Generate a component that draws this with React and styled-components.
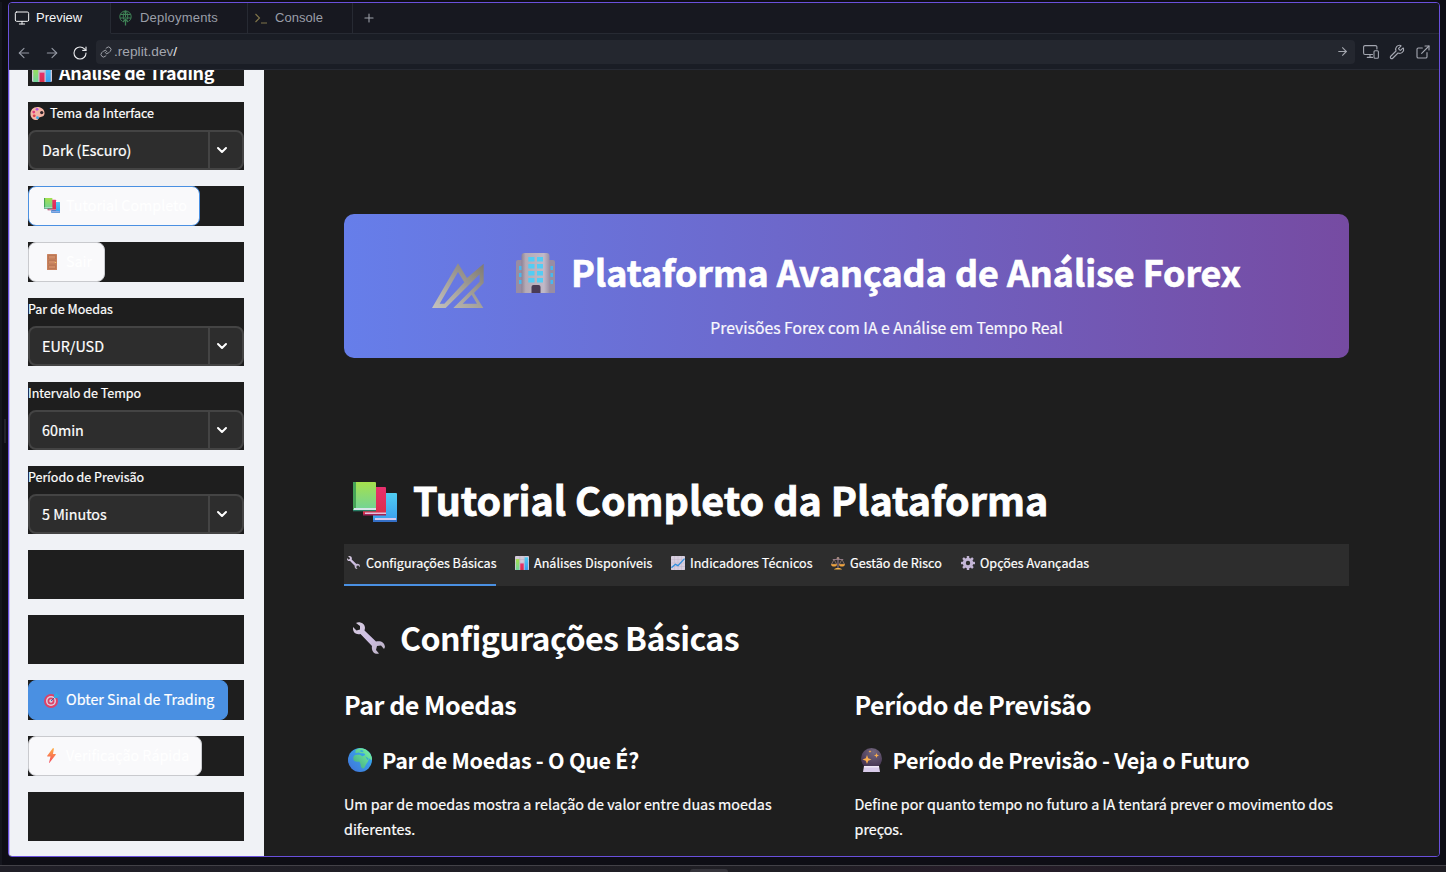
import React from "react";
import styled, { createGlobalStyle } from "styled-components";
import {
  ArrowLeft,
  ArrowRight,
  RotateCw,
  Link,
  Wrench,
  ExternalLink,
  Plus,
  Monitor,
  Terminal,
} from "lucide-react";

const SANS = `"Noto Sans CJK JP", "Noto Sans", sans-serif`;
const UI = `"Liberation Sans", Arial, sans-serif`;

const GlobalStyle = createGlobalStyle`
  * { box-sizing: border-box; }
  html, body { margin: 0; height: 872px; overflow: hidden; background: #0e0e15; }
  h1, h2, h3, h4, p { margin: 0; font-weight: inherit; }
  svg { display: block; flex: none; }
`;

/* ---------- workspace shell ---------- */

const Workspace = styled.div`
  width: 1446px;
  height: 872px;
  display: flex;
  flex-direction: column;
  background: #0e0e15;
  font-family: ${UI};
`;
const Stage = styled.div`
  display: flex;
  height: 865px;
  padding-top: 2px;
`;
const LeftEdge = styled.div`
  width: 8px;
  display: flex;
  align-items: center;
  background: linear-gradient(90deg, #15161e 2px, transparent 2px);
`;
const LeftGrip = styled.div`
  width: 2px;
  height: 24px;
  margin-left: 4px;
  margin-bottom: 6px;
  background: #22222b;
`;
const Pane = styled.div`
  width: 1432px;
  height: 855px;
  border: 1px solid #6a50dc;
  border-radius: 4px;
  overflow: hidden;
  display: flex;
  flex-direction: column;
  background: #1a1d25;
`;
const Dock = styled.div`
  height: 7px;
  border-top: 1px solid #424147;
  background: linear-gradient(90deg, #201f27, #1f1e24 55%, #261c29 68%, #1f1d23 85%);
  padding: 3px 0 0 690px;
`;
const DockGrip = styled.div`
  width: 38px;
  height: 3px;
  border-radius: 3px 3px 0 0;
  background: #35343b;
`;

const TabStrip = styled.div`
  height: 31px;
  display: flex;
  flex: none;
`;
const PaneTab = styled.div`
  width: ${(p) => p.$w}px;
  display: flex;
  align-items: center;
  gap: ${(p) => p.$gap}px;
  padding-left: ${(p) => p.$pad}px;
  padding-bottom: 1px;
  color: ${(p) => (p.$active ? "#f3f4f6" : "#9a9ea8")};
  background: ${(p) => (p.$active ? "#1a1d25" : "#171820")};
  border-right: 1px solid #272a33;
  border-bottom: 1px solid ${(p) => (p.$active ? "#1a1d25" : "#272a33")};
  font-size: 13px;
  letter-spacing: ${(p) => p.$ls || 0}px;
`;
const TabFill = styled.div`
  flex: 1;
  display: flex;
  align-items: center;
  padding-left: 9px;
  background: #171820;
  border-bottom: 1px solid #272a33;
  color: #a0a3ab;
`;
const AddressBar = styled.div`
  height: 36px;
  flex: none;
  display: flex;
  align-items: center;
  border-bottom: 1px solid #272a33;
  color: #a3a6b0;
`;
const NavButton = styled.div`
  width: 28px;
  height: 18px;
  display: flex;
  align-items: flex-end;
  justify-content: center;
  color: ${(p) => (p.$bright ? "#e8e9ec" : "#9498a3")};
`;
const Nav = styled.div`
  display: flex;
  padding-left: 1px;
`;
const UrlField = styled.div`
  width: 1259px;
  height: 24px;
  margin-left: 2px;
  border-radius: 4px;
  background: #24272f;
  display: flex;
  align-items: center;
  padding: 0 6px 0 4px;
  gap: 2px;
  font-size: 13.7px;
  color: #a3a6ae;
  b { font-weight: 400; color: #eceef0; }
`;
const Url = styled.span`
  flex: 1;
  padding-bottom: 1px;
`;
const Tools = styled.div`
  display: flex;
  gap: 10px;
  padding-left: 8px;
`;

/* ---------- embedded app ---------- */

const Page = styled.div`
  flex: 1;
  display: flex;
  min-height: 0;
  font-family: ${SANS};
  color: #fff;
  background: #1e1e1e;
  -webkit-text-stroke: 0.2px currentColor;
`;
const Sidebar = styled.aside`
  width: 255px;
  padding: 0 20px 0 18px;
  border-left: 1px solid #c9bef7;
  background: #f0f2f6;
  display: flex;
  flex-direction: column;
  gap: 16px;
`;
const Block = styled.div`
  height: ${(p) => p.$h}px;
  flex: none;
  background: #1e1e1e;
`;
const ClippedTitle = styled(Block)`
  display: flex;
  flex-direction: column;
  justify-content: flex-end;
  overflow: hidden;
`;
const SideHeading = styled.h2`
  display: flex;
  align-items: center;
  height: 30px;
  flex: none;
  margin-bottom: -1px;
  font-size: 17.9px;
  font-weight: 700;
  white-space: nowrap;
  letter-spacing: -0.34px;
  -webkit-text-stroke: 0;
`;
const FieldLabel = styled.div`
  height: 28px;
  display: flex;
  line-height: 21px;
  font-size: 12.53px;
  white-space: nowrap;
`;
const Select = styled.div`
  height: 40px;
  display: flex;
  border: 2px solid #444;
  border-radius: 8px;
  background: #2d2d2d;
  overflow: hidden;
`;
const SelectValue = styled.div`
  width: 180px;
  padding-left: 12px;
  line-height: 35px;
  font-size: 14.32px;
  border-right: 2px solid #444;
  white-space: nowrap;
`;
const SelectArrow = styled.div`
  flex: 1;
  display: flex;
  align-items: center;
  padding-left: 6px;
`;
const tones = {
  focus: ["#4a90e2", "#f9f9fb", "#ffffff"],
  plain: ["#c9cace", "#f9f9fb", "#ffffff"],
  primary: ["#4a90e2", "#4a90e2", "#ffffff"],
};
const Button = styled.div`
  width: ${(p) => p.$w}px;
  height: 40px;
  border: 1px solid ${(p) => tones[p.$tone][0]};
  border-radius: 8px;
  background: ${(p) => tones[p.$tone][1]};
  color: ${(p) => tones[p.$tone][2]};
  display: flex;
  align-items: center;
  padding: 0 0 3px 14px;
  font-size: 14.34px;
  white-space: nowrap;
`;
const Glyph = styled.span`
  width: ${(p) => p.$w}px;
  padding-left: ${(p) => p.$l || 0}px;
  padding-top: ${(p) => p.$t || 0}px;
  flex: none;
`;

const Main = styled.main`
  flex: 1;
  padding: 144px 0 0 80px;
`;
const Banner = styled.div`
  width: 1005px;
  height: 144px;
  border-radius: 10px;
  background: linear-gradient(90deg, #667eea 0%, #764ba2 100%);
  display: flex;
  padding: 33px 0 0 88px;
`;
const BannerLogo = styled.div`
  padding-top: 16px;
  width: 76px;
`;
const BannerText = styled.div`
  width: 757px;
`;
const BannerTitle = styled.h1`
  height: 48px;
  display: flex;
  align-items: center;
  font-size: 35.8px;
  font-weight: 700;
  white-space: nowrap;
  -webkit-text-stroke: 0.7px currentColor;
`;
const BannerSub = styled.p`
  margin-top: 20px;
  line-height: 26px;
  font-size: 15.75px;
  text-align: center;
  color: #f9f8fd;
`;
const Heading = styled.h2`
  display: flex;
  align-items: center;
  height: ${(p) => p.$h}px;
  margin-top: ${(p) => p.$mt}px;
  font-size: ${(p) => p.$size}px;
  font-weight: 700;
  letter-spacing: ${(p) => p.$ls || 0}px;
  -webkit-text-stroke: ${(p) => p.$stroke || 0}px currentColor;
  white-space: nowrap;
`;
const Tabs = styled.nav`
  width: 1005px;
  height: 42px;
  margin-top: 20px;
  display: flex;
  gap: 16px;
  background: #2d2d2d;
`;
const Tab = styled.div`
  width: ${(p) => p.$w}px;
  display: flex;
  border-bottom: 2px solid ${(p) => (p.$active ? "#4a90e2" : "transparent")};
  line-height: 37px;
  font-size: 12.58px;
  white-space: nowrap;
`;
const Columns = styled.div`
  width: 1005px;
  display: grid;
  grid-template-columns: 1fr 1fr;
  gap: 16px;
`;
const Body = styled.p`
  margin-top: 17px;
  font-size: 14.33px;
  line-height: 25px;
`;

/* ---------- drawings ---------- */

const Svg = ({ w, h, vb, children }) => (
  <svg width={w} height={h || w} viewBox={vb || "0 0 32 32"} fill="none">
    {children}
  </svg>
);

const HiddenSvg = styled.svg`
  position: absolute;
`;
const Defs = () => (
  <HiddenSvg width="0" height="0">
    <defs>
      <linearGradient id="green" x1="0" y1="0" x2="0" y2="1">
        <stop stopColor="#a5e04d" /><stop offset="1" stopColor="#6fd39a" />
      </linearGradient>
      <linearGradient id="pink" x1="0" y1="0" x2="0" y2="1">
        <stop stopColor="#e8306e" /><stop offset="1" stopColor="#d92f48" />
      </linearGradient>
      <linearGradient id="blue" x1="0" y1="0" x2="0" y2="1">
        <stop stopColor="#50cdf2" /><stop offset="1" stopColor="#3a9bee" />
      </linearGradient>
      <linearGradient id="metal" x1="0" y1="1" x2="1" y2="0">
        <stop stopColor="#c4c2be" /><stop offset=".5" stopColor="#a3a09a" /><stop offset="1" stopColor="#7f7a72" />
      </linearGradient>
      <linearGradient id="wall" x1="0" y1="0" x2="1" y2="0">
        <stop stopColor="#8d8496" /><stop offset=".15" stopColor="#b5abb6" /><stop offset=".8" stopColor="#c0b9c8" /><stop offset="1" stopColor="#9b91a5" />
      </linearGradient>
      <linearGradient id="bolt" x1="0" y1="0" x2="0" y2="1">
        <stop stopColor="#ffb044" /><stop offset="1" stopColor="#f3475c" />
      </linearGradient>
      <linearGradient id="sea" x1="1" y1="0" x2="0" y2="1">
        <stop stopColor="#35b8f2" /><stop offset="1" stopColor="#416fd8" />
      </linearGradient>
      <linearGradient id="land" x1="1" y1="0" x2="0" y2="1">
        <stop stopColor="#7df8a6" /><stop offset="1" stopColor="#3da581" />
      </linearGradient>
      <linearGradient id="steel" x1="0" y1="0" x2="1" y2="1">
        <stop stopColor="#d5cbdc" /><stop offset=".5" stopColor="#cfbfe4" /><stop offset="1" stopColor="#b9b0c0" />
      </linearGradient>
      <radialGradient id="orb" cx=".6" cy=".2" r=".8">
        <stop stopColor="#74687f" /><stop offset="1" stopColor="#41304f" />
      </radialGradient>
    </defs>
  </HiddenSvg>
);

const Books = ({ w }) => (
  <Svg w={w} h={(w * 40) / 44} vb="0 0 44 40">
    <path d="M20 11h23q1 0 1 1v28H20z" fill="url(#blue)" />
    <path d="M22 36h21v2H22z" fill="#d6c8ee" /><path d="M20 38h24v2H20z" fill="#346fc6" />
    <path d="M10 5h22q1 0 1 1v27H10z" fill="url(#pink)" />
    <path d="M12 30.500h21v1.500H12z" fill="#e3c0dd" /><path d="M10 32h23v1.500H10z" fill="#a32354" />
    <path d="M0 1q0-1 1-1h21q1 0 1 1v28H0z" fill="url(#green)" />
    <path d="M0 0h3v27H0z" fill="#46a457" /><path d="M1 26h22v2H1z" fill="#d5e5e8" /><path d="M0 28h23v1.300H0z" fill="#287e66" />
  </Svg>
);
const BarChart = ({ w }) => (
  <Svg w={w}>
    <rect width="32" height="32" rx="2" fill="#d3cad9" />
    <path d="M0 8h32M0 16h32M11 0v32M21 0v32" stroke="#b6a9c0" strokeWidth="1" />
    <rect x="2" y="7" width="8" height="25" fill="url(#green)" />
    <rect x="12" y="17" width="8" height="15" fill="url(#pink)" />
    <rect x="22" y="3" width="8" height="29" fill="url(#blue)" />
  </Svg>
);
const LineChart = ({ w }) => (
  <Svg w={w}>
    <rect width="32" height="32" rx="2" fill="#d8cfdf" />
    <path d="M0 8h32M0 16h32M0 24h32M8 0v32M16 0v32M24 0v32" stroke="#beb2c8" />
    <path d="M1 27l9-8 6 3L31 6" stroke="#318fdd" strokeWidth="3" />
  </Svg>
);
const Palette = ({ w }) => (
  <Svg w={w}>
    <path d="M16 2C6 2 1 9 1 17c0 8 6 13 13 13 5 0 3-5 7-6 5-1 10-2 10-9C31 7 24 2 16 2z" fill="#f3b5a4" />
    <circle cx="8" cy="13" r="3" fill="#e23d7d" /><circle cx="15" cy="7" r="3" fill="#b454db" />
    <circle cx="9" cy="21" r="3" fill="#de3f4f" /><circle cx="16" cy="25" r="3" fill="#41a9e6" />
    <circle cx="25" cy="14" r="3.500" fill="#34242a" />
  </Svg>
);
const Door = ({ w }) => (
  <Svg w={w} h={w * 1.6} vb="0 0 20 32">
    <rect width="20" height="32" rx="1" fill="#c9825e" />
    <path d="M3 3h14v7H3zM3 13h14v7H3zM3 23h14v6H3z" fill="#d08b66" stroke="#ab694b" />
    <circle cx="17" cy="17" r="1.500" fill="#f4c267" />
  </Svg>
);
const Target = ({ w }) => (
  <Svg w={w}>
    <circle cx="14" cy="18" r="14" fill="#de4268" /><circle cx="14" cy="18" r="10" fill="#dccfe0" />
    <circle cx="14" cy="18" r="7" fill="#de4268" /><circle cx="14" cy="18" r="3.500" fill="#dccfe0" />
    <path d="M14 18L25 7" stroke="#3a66a3" strokeWidth="2" />
    <path d="M20 6l6-6 1 5 5 1-6 6h-6z" fill="#35a6e4" />
  </Svg>
);
const Bolt = ({ w }) => (
  <Svg w={w} h={w * 1.7} vb="0 0 18 31">
    <path d="M12 0L0 16q0 1 1 1h6L4 30q0 1 1 0l13-17q0-1-1-1h-5l2-11q0-1-2-1z" fill="url(#bolt)" />
  </Svg>
);
const Spanner = ({ w }) => (
  <Svg w={w}>
    <path d="M3 1c3-2 9 0 9 5l-.5 2.500L23 19.500c5-1 8.500 1 9 5.500l-1 2-3-3.500-4 .5-1 4 3 3.500c-4 1.500-8-2-7-7.500L7.500 12C3 13 0 10.500 0 6.500V5l3.500 3.500L7 7.500V4z" fill="url(#steel)" />
  </Svg>
);
const Scales = ({ w }) => (
  <Svg w={w}>
    <path d="M16 2v26M4 8h24" stroke="#8d7788" strokeWidth="2.500" />
    <path d="M7 8L1 19h12zM25 8l-6 11h12z" stroke="#ac8c80" strokeWidth="1.500" />
    <path d="M0 19h14c0 7-14 7-14 0zM18 19h14c0 7-14 7-14 0z" fill="#eea23c" />
    <path d="M7 31c0-5 18-5 18 0z" fill="#f2b24a" /><circle cx="16" cy="5" r="3" fill="#a5887d" />
  </Svg>
);
const Gear = ({ w }) => (
  <Svg w={w}>
    <circle cx="16" cy="16" r="8.500" stroke="#c4b6d6" strokeWidth="7" />
    {[0, 45, 90, 135, 180, 225, 270, 315].map((a) => (
      <rect key={a} x="13.200" y="0" width="5.600" height="7" rx="1.200" fill="#c4b6d6" transform={`rotate(${a} 16 16)`} />
    ))}
  </Svg>
);
const Globe = ({ w }) => (
  <Svg w={w}>
    <circle cx="16" cy="16" r="16" fill="url(#sea)" />
    <path d="M10 3C15-1 22 0 26 4c4 3 6 7 6 12-2 0-3-2-4-2-1 5-4 7-5 10-2 5-5 4-6 0 0-3-1-4-2-6-4 1-8 0-8-4 0-3 1-4 4-5l5 0 3 2 3-1 1-2-3-1-3 0-3-1-4 1z" fill="url(#land)" />
    <path d="M23 11l3 5 1.500-2zM15 4l4 1.500 2-1.500-3-1.500z" fill="#36a9d8" />
  </Svg>
);
const Crystal = ({ w }) => (
  <Svg w={w} h={(w * 24) / 21} vb="0 0 21 24">
    <circle cx="10.500" cy="10.500" r="10.500" fill="url(#orb)" />
    <path d="M3 18h15l1 6H2z" fill="#d9cbea" /><path d="M3 18h15v1.500H3z" fill="#f0e8f7" />
    <path d="M6 7l1.200 3.200L10.500 11.500 7.200 12.700 6 16l-1.200-3.300L1.500 11.500l3.300-1.300zM15.500 5l.7 1.800 1.800.7-1.800.7-.7 1.800-.7-1.800-1.800-.7 1.800-.7zM9 2l.4 1.100 1.100.4-1.100.4L9 5l-.4-1.100-1.100-.4 1.100-.4z" fill="#f9ad4e" />
  </Svg>
);
const Building = () => (
  <Svg w={39} h={40} vb="0 0 39 40">
    <path d="M0 9q0-2 2-2h6v33H0zM39 9q0-2-2-2h-6v33h8z" fill="#988da3" />
    <path d="M5.500 3q0-3 3-3h22q3 0 3 3v37h-28z" fill="url(#wall)" />
    {[4, 11, 18, 25].map((y) => (
      <path key={y} d={`M12.300 ${y}h6.200v4.600h-6.200zM21 ${y}h6v4.600h-6z`} fill="#53cdf4" />
    ))}
    {[13, 20, 27].map((y) => (
      <path key={y} d={`M3 ${y}h2.500v4H3zM34.500 ${y}h2.500v4h-2.500z`} fill="#48b8ee" />
    ))}
    <path d="M15.500 40v-6q0-2 2-2h5q2 0 2 2v6z" fill="#4a3b55" />
  </Svg>
);
const Logo = () => (
  <Svg w={52} h={45} vb="277 190 156 135">
    <path
      fillRule="evenodd"
      fill="url(#metal)"
      d="M277 325L355 191L382 235L432 192V250L403 280L431 325H341L420 246V224L318 325ZM300 312L355 217L374 248L314 312ZM369 312L396 285L412 312Z"
    />
  </Svg>
);
const DeployIcon = () => (
  <svg width="13" height="16" viewBox="0 0 13 16" fill="none" stroke="#3f8256" strokeWidth="1">
    <path d="M3 11.200A5.700 5.700 0 1 1 10 11.200M1.300 4.500h10.400M1 8h11M6.500.700C4 3 3.800 7 4.800 9.500M6.500.700C9 3 9.200 7 8.200 9.500M6.500 1v6" />
    <path d="M6.500 15.500V9.500M3.800 12l2.700-2.700L9.200 12" strokeWidth="1.300" />
  </svg>
);
const PromptIcon = () => (
  <svg width="14" height="14" viewBox="0 0 14 14" fill="none" stroke="#80754a" strokeWidth="1.100">
    <path d="M1.500 3l4 4-4 4M7 12h6" />
  </svg>
);
const DevicesIcon = () => (
  <svg width="16" height="16" viewBox="0 0 16 16" fill="none" stroke="currentColor" strokeWidth="1.100">
    <path d="M9.500 10.500H2A1.400 1.400 0 0 1 .6 9.100V3A1.400 1.400 0 0 1 2 1.600h10.500A1.400 1.400 0 0 1 13.900 3v2M7 10.500v2.800M4.300 13.400H9.500" strokeLinecap="round" />
    <rect x="11" y="6.800" width="4.400" height="7.400" rx="1" />
  </svg>
);
const Chevron = () => (
  <svg width="12" height="8" viewBox="0 0 12 8" fill="none">
    <path d="M2 2l4 4 4-4" stroke="#fff" strokeWidth="2" strokeLinecap="round" strokeLinejoin="round" />
  </svg>
);

const Field = ({ icon, label, value }) => (
  <Block $h={68}>
    <FieldLabel>{icon}{label}</FieldLabel>
    <Select>
      <SelectValue>{value}</SelectValue>
      <SelectArrow><Chevron /></SelectArrow>
    </Select>
  </Block>
);
const Action = ({ tone, w, icon, inset = 1, children }) => (
  <Block $h={40}>
    <Button $tone={tone} $w={w}>
      <Glyph $w={23} $l={inset} $t={2}>{icon}</Glyph>
      {children}
    </Button>
  </Block>
);

const TABS = [
  [152, "Configurações Básicas", <Spanner w={13} />],
  [140, "Análises Disponíveis", <BarChart w={14} />],
  [144, "Indicadores Técnicos", <LineChart w={14} />],
  [114, "Gestão de Risco", <Scales w={14} />],
  [131, "Opções Avançadas", <Gear w={14} />],
];

export default function App() {
  return (
    <Workspace>
      <GlobalStyle />
      <Defs />
      <Stage>
        <LeftEdge><LeftGrip /></LeftEdge>
        <Pane>
          <TabStrip>
            <PaneTab $active $w={102} $gap={6} $pad={5}><Monitor size={16} strokeWidth={1.5} />Preview</PaneTab>
            <PaneTab $w={137} $gap={8} $pad={8} $ls={0.2}><DeployIcon />Deployments</PaneTab>
            <PaneTab $w={105} $gap={7} $pad={6} $ls={0.05}><PromptIcon />Console</PaneTab>
            <TabFill><Plus size={14} strokeWidth={1.8} /></TabFill>
          </TabStrip>
          <AddressBar>
            <Nav>
              <NavButton><ArrowLeft size={16} strokeWidth={1.7} /></NavButton>
              <NavButton><ArrowRight size={16} strokeWidth={1.7} /></NavButton>
              <NavButton $bright><RotateCw size={16} strokeWidth={1.7} /></NavButton>
            </Nav>
            <UrlField>
              <Link size={12} strokeWidth={1.9} />
              <Url>.replit.dev<b>/</b></Url>
              <ArrowRight size={13} strokeWidth={2} />
            </UrlField>
            <Tools>
              <DevicesIcon />
              <Wrench size={16} strokeWidth={1.7} />
              <ExternalLink size={16} strokeWidth={1.7} />
            </Tools>
          </AddressBar>
          <Page>
            <Sidebar>
              <ClippedTitle $h={16}>
                <SideHeading><Glyph $w={31} $l={4}><BarChart w={20} /></Glyph>Análise de Trading</SideHeading>
              </ClippedTitle>
              <Field icon={<Glyph $w={22} $l={2} $t={4}><Palette w={15} /></Glyph>} label="Tema da Interface" value="Dark (Escuro)" />
              <Action tone="focus" w={172} icon={<Books w={16} />}>Tutorial Completo</Action>
              <Action tone="plain" w={77} inset={4} icon={<Door w={10} />}>Sair</Action>
              <Field label="Par de Moedas" value="EUR/USD" />
              <Field label="Intervalo de Tempo" value="60min" />
              <Field label="Período de Previsão" value="5 Minutos" />
              <Block $h={49} />
              <Block $h={49} />
              <Action tone="primary" w={200} icon={<Target w={16} />}>Obter Sinal de Trading</Action>
              <Action tone="plain" w={174} inset={4} icon={<Bolt w={9} />}>Verificação Rápida</Action>
              <Block $h={49} />
            </Sidebar>
            <Main>
              <Banner>
                <BannerLogo><Logo /></BannerLogo>
                <BannerText>
                  <BannerTitle><Glyph $w={63} $l={8} $t={4}><Building /></Glyph>Plataforma Avançada de Análise Forex</BannerTitle>
                  <BannerSub>Previsões Forex com IA e Análise em Tempo Real</BannerSub>
                </BannerText>
              </Banner>
              <Heading as="h1" $h={52} $mt={114} $size={39.4} $stroke={0.8}>
                <Glyph $w={69} $l={9} $t={8}><Books w={44} /></Glyph>Tutorial Completo da Plataforma
              </Heading>
              <Tabs>
                {TABS.map(([w, label, icon], i) => (
                  <Tab key={label} $w={w} $active={i === 0}>
                    <Glyph $w={22} $l={3} $t={12}>{icon}</Glyph>{label}
                  </Tab>
                ))}
              </Tabs>
              <Heading $h={44} $mt={29} $size={32.2} $ls={-0.6}>
                <Glyph $w={56} $l={9} $t={1}><Spanner w={32} /></Glyph>Configurações Básicas
              </Heading>
              <Columns>
                <section>
                  <Heading as="h3" $h={34} $mt={28} $size={25.1} $ls={-0.5}>Par de Moedas</Heading>
                  <Heading as="h4" $h={30} $mt={23} $size={21.5} $ls={-0.3}>
                    <Glyph $w={38} $l={4} $t={2}><Globe w={24} /></Glyph>Par de Moedas - O Que É?
                  </Heading>
                  <Body>Um par de moedas mostra a relação de valor entre duas moedas diferentes.</Body>
                </section>
                <section>
                  <Heading as="h3" $h={34} $mt={28} $size={25.1} $ls={-0.5}>Período de Previsão</Heading>
                  <Heading as="h4" $h={30} $mt={23} $size={21.5} $ls={-0.3}>
                    <Glyph $w={38} $l={6} $t={2}><Crystal w={21} /></Glyph>Período de Previsão - Veja o Futuro
                  </Heading>
                  <Body>Define por quanto tempo no futuro a IA tentará prever o movimento dos preços.</Body>
                </section>
              </Columns>
            </Main>
          </Page>
        </Pane>
      </Stage>
      <Dock><DockGrip /></Dock>
    </Workspace>
  );
}
